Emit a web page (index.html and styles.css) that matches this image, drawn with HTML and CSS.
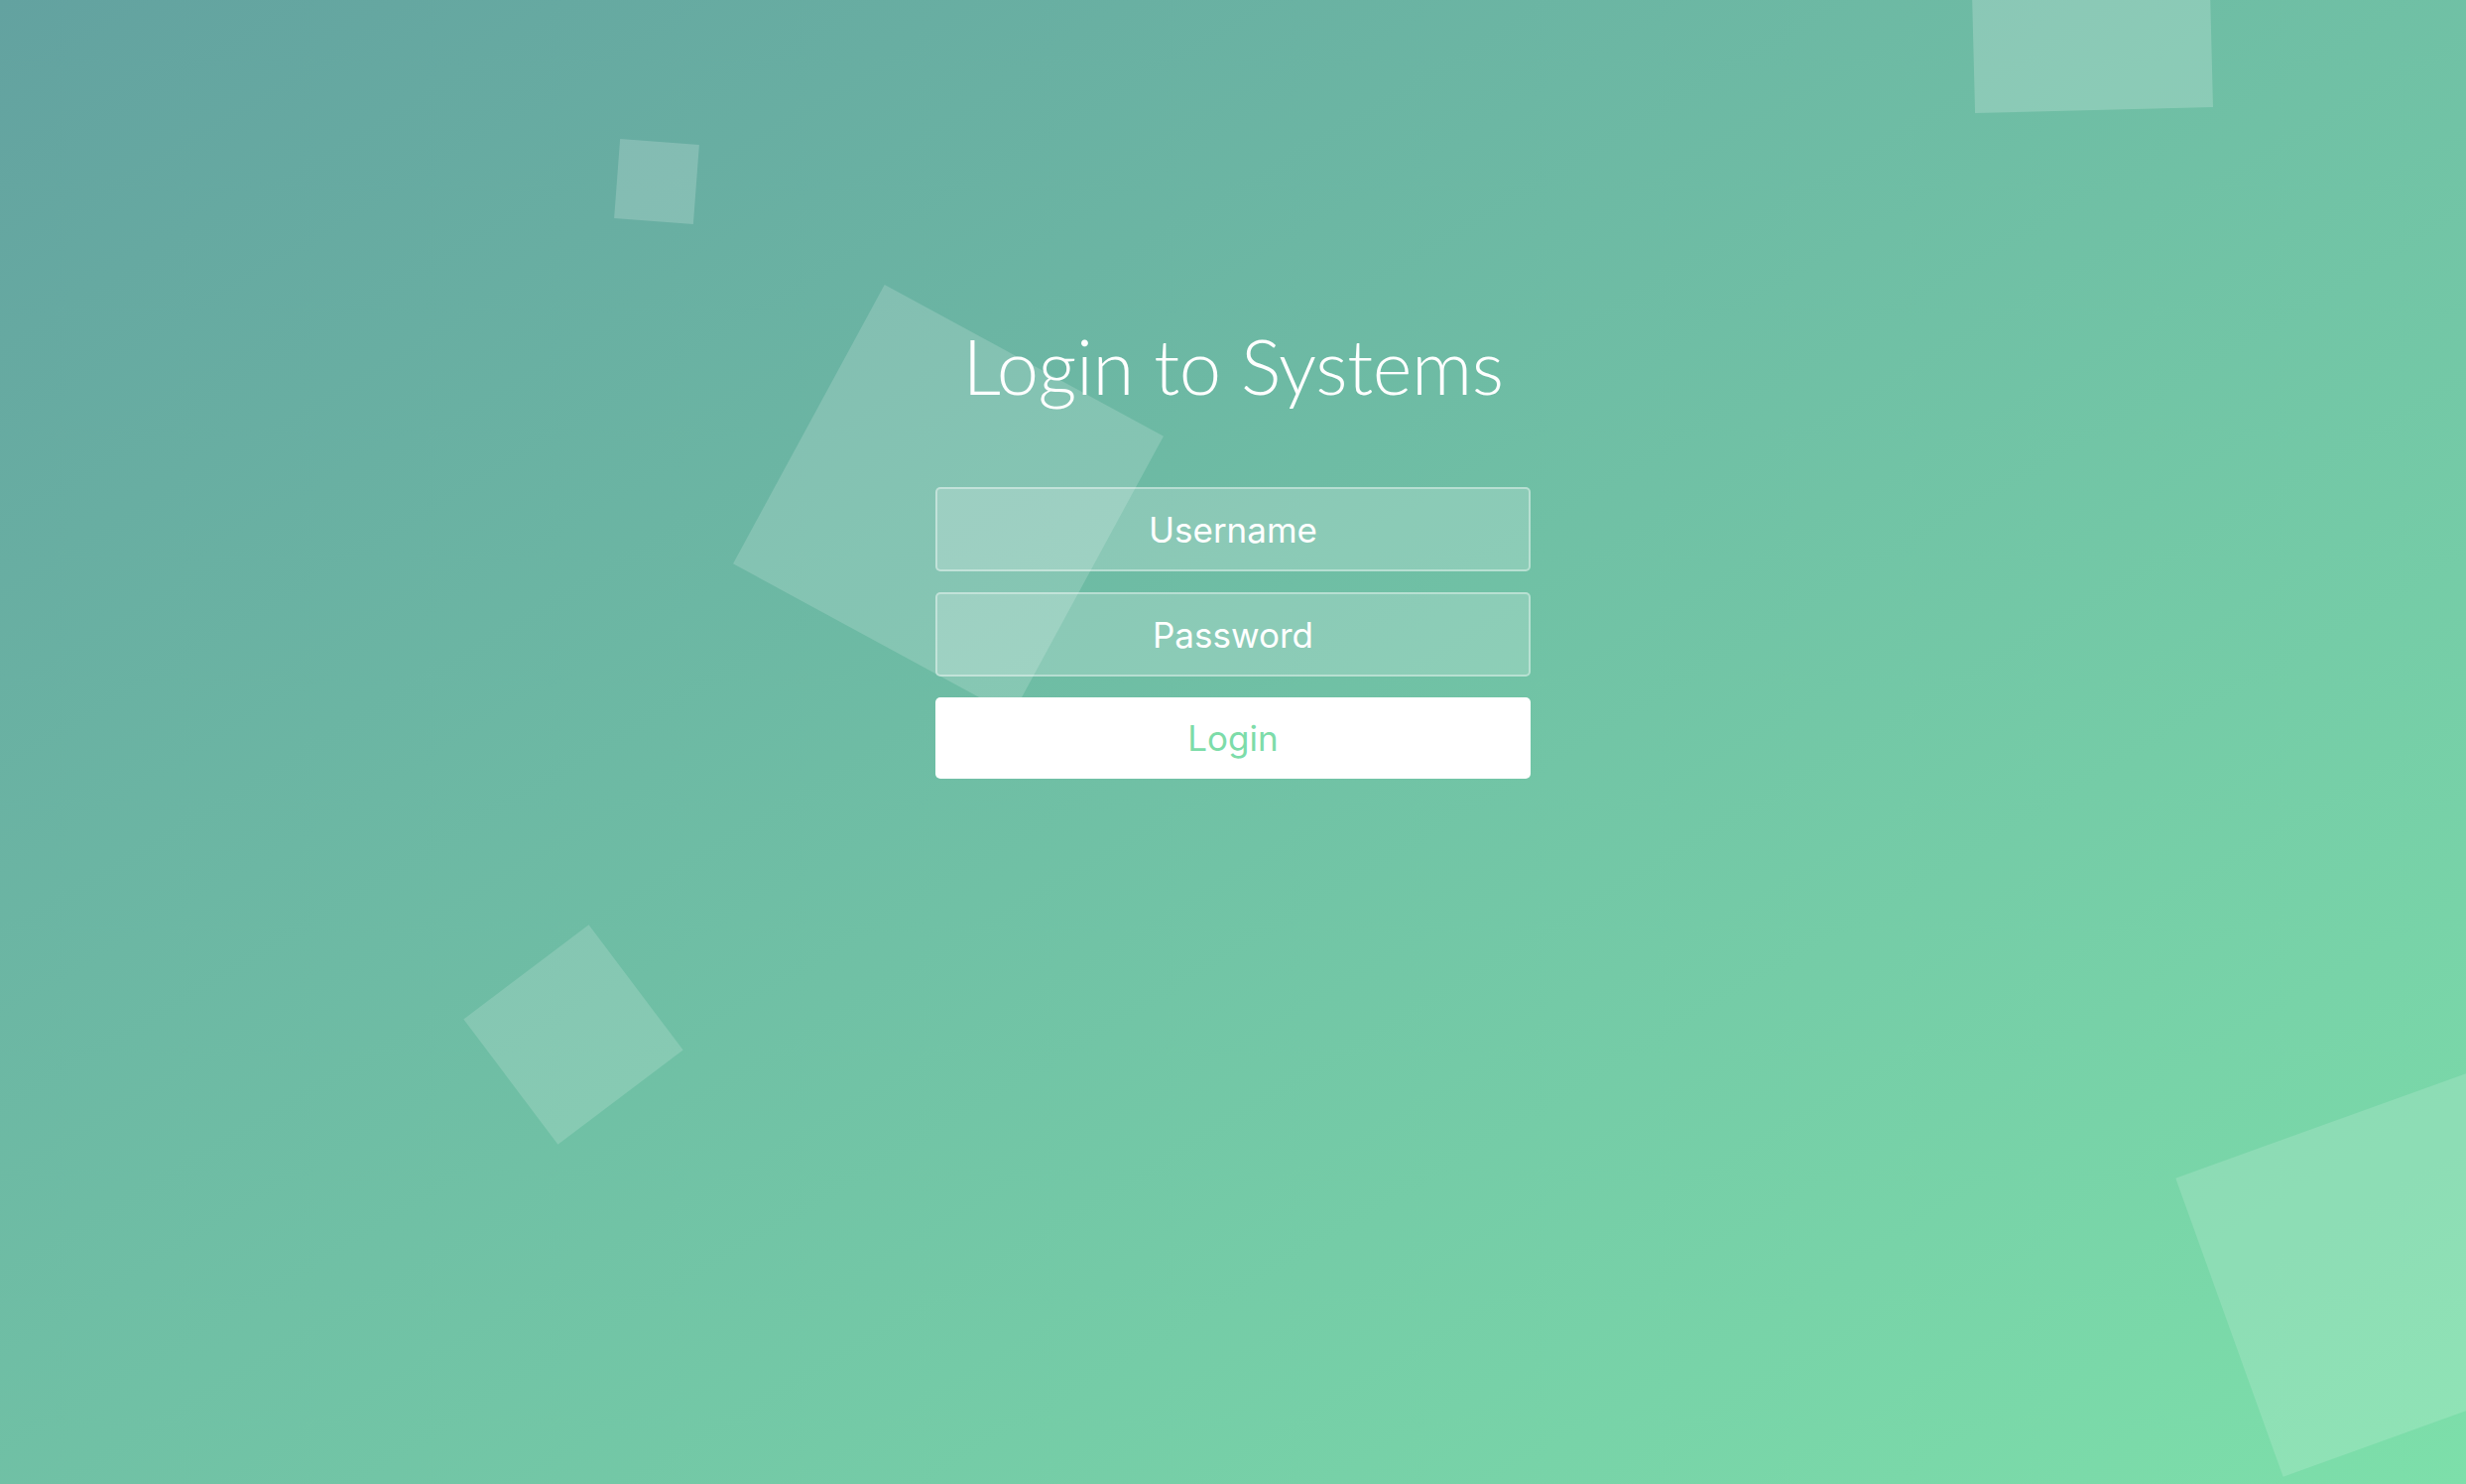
FILE: index.html
```html
<!DOCTYPE html>
<html lang="en">
<head>
<meta charset="utf-8">
<title>Login to Systems</title>
<link rel="stylesheet" href="styles.css">
</head>
<body>
<div class="wrapper">
  <ul class="bg-squares">
    <li class="sq sq-small"></li>
    <li class="sq sq-top"></li>
    <li class="sq sq-mid"></li>
    <li class="sq sq-left"></li>
    <li class="sq sq-corner"></li>
  </ul>
  <div class="container">
    <h1 class="title">Login to Systems</h1>
    <form class="form">
      <input class="field" type="text" placeholder="Username">
      <input class="field" type="password" placeholder="Password">
      <button class="btn" type="button">Login</button>
    </form>
  </div>
</div>
</body>
</html>
```

FILE: styles.css
```css
* { box-sizing: border-box; }
html, body { margin: 0; padding: 0; height: 100%; }
body {
  overflow: hidden;
  font-family: "Lato", "Open Sans", sans-serif;
}
.wrapper {
  position: relative;
  width: 100%;
  height: 100vh;
  overflow: hidden;
  background: linear-gradient(to bottom right, #63a2a0 0%, #7ddfaa 100%);
}
.bg-squares {
  position: absolute;
  inset: 0;
  margin: 0;
  padding: 0;
  list-style: none;
  z-index: 1;
}
.sq {
  position: absolute;
  display: block;
  background: rgba(255, 255, 255, 0.18);
}
.sq-small {
  left: 622px; top: 143px; width: 80px; height: 80px;
  transform: rotate(4.3deg);
  background: rgba(255, 255, 255, 0.19);
}
.sq-top {
  left: 1988px; top: -129px; width: 240px; height: 240px;
  transform: rotate(-1.44deg);
  background: rgba(255, 255, 255, 0.2);
}
.sq-mid {
  left: 796px; top: 344px; width: 320px; height: 320px;
  transform: rotate(28.5deg);
  background: rgba(255, 255, 255, 0.17);
}
.sq-left {
  left: 499px; top: 964px; width: 158px; height: 158px;
  transform: rotate(53deg);
  background: rgba(255, 255, 255, 0.16);
}
.sq-corner {
  left: 2238px; top: 1124px; width: 320px; height: 320px;
  transform: rotate(-19.8deg);
  background: rgba(255, 255, 255, 0.15);
}
.container {
  position: relative;
  z-index: 2;
  display: flex;
  flex-direction: column;
  align-items: center;
  padding-top: 331px;
}
.title {
  margin: 0 0 84px 0;
  font-family: "Lato", sans-serif;
  font-weight: 300;
  font-size: 76px;
  line-height: 76px;
  letter-spacing: -0.4px;
  color: #ffffff;
  text-align: center;
}
.form {
  display: flex;
  flex-direction: column;
  align-items: center;
  gap: 21px;
  width: 600px;
}
.field {
  appearance: none;
  outline: 0;
  display: block;
  width: 600px;
  height: 85px;
  margin: 0;
  padding: 0 20px;
  border: 2px solid rgba(255, 255, 255, 0.38);
  border-radius: 5px;
  background-color: rgba(255, 255, 255, 0.2);
  text-align: center;
  font-family: "Inter", "Roboto", sans-serif;
  font-size: 35px;
  font-weight: 400;
  color: #ffffff;
}
.field::placeholder {
  color: #ffffff;
  opacity: 1;
}
.btn {
  appearance: none;
  display: block;
  width: 600px;
  height: 82px;
  margin: 0;
  border: 0;
  border-radius: 5px;
  background: #ffffff;
  color: #7ddca9;
  font-family: "Inter", "Roboto", sans-serif;
  font-size: 35px;
  font-weight: 400;
  cursor: pointer;
}
```
